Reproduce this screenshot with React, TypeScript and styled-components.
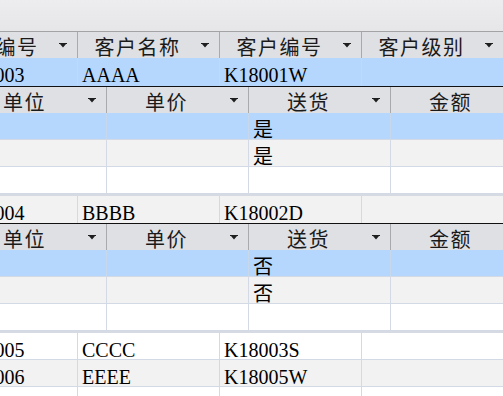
import styled, { createGlobalStyle } from "styled-components";

const GlobalStyle = createGlobalStyle`
  *, *::before, *::after {
    box-sizing: border-box;
  }
  html, body {
    margin: 0;
    padding: 0;
    background: #ffffff;
    overflow: hidden;
  }
  body {
    font-family: "Liberation Serif", "Noto Sans CJK SC", serif;
    color: #000000;
  }
`;

type Tone = "blue" | "grey" | "white";

const toneColor: Record<Tone, string> = {
  blue: "#b6d7fd",
  grey: "#f2f2f2",
  white: "#ffffff",
};

const Page = styled.div`
  width: 503px;
  height: 396px;
  overflow: hidden;
`;

const TopBar = styled.div`
  height: 32px;
  background: linear-gradient(#ededef, #e6e6e8);
  border-bottom: 1px solid #a3a3a6;
`;

const Sheet = styled.div`
  margin-left: -64px;
  width: 640px;
`;

const HeaderRow = styled.div<{ $indent?: number }>`
  display: grid;
  grid-template-columns: repeat(4, 142px);
  height: 26px;
  margin-left: ${(p) => p.$indent || 0}px;
  background: #dfe0e4;
`;

const HeaderCell = styled.div`
  display: flex;
  align-items: center;
  border-right: 1px solid #a9aaad;
  font-family: "Noto Sans CJK SC", sans-serif;
  font-size: 20px;
  line-height: 20px;
  letter-spacing: 1.5px;
  color: #1a1a1a;
`;

const HeaderTitle = styled.span`
  flex: 1;
  text-align: center;
  padding-top: 3px;
  white-space: nowrap;
`;

const FilterButton = styled.span<{ $hidden?: boolean }>`
  width: 22px;
  display: flex;
  align-items: center;
  padding-left: 4px;
  visibility: ${(p) => (p.$hidden ? "hidden" : "visible")};
`;

const DataRow = styled.div<{ $tone: Tone; $height: number; $dark?: boolean; $indent?: number }>`
  display: grid;
  grid-template-columns: repeat(4, 142px);
  height: ${(p) => p.$height}px;
  margin-left: ${(p) => p.$indent || 0}px;
  background: ${(p) => toneColor[p.$tone]};
  border-bottom: 1px solid ${(p) => (p.$dark ? "#111111" : "#d3dae6")};
`;

const DataCell = styled.div<{ $tone: Tone }>`
  border-right: 1px solid ${(p) => (p.$tone === "blue" ? "#c8d8ec" : "#d3dae6")};
  padding: 8px 0 0 4px;
  font-size: 20px;
  line-height: 18px;
  white-space: nowrap;
`;

const Divider = styled.div`
  height: 2px;
  background: #d6dae2;
`;

function FilterArrow() {
  return (
    <svg width="8" height="5" viewBox="0 0 8 5">
      <path d="M0 0h8v1H0z M1 1h6L4 4.5z" fill="#1e1e1e" />
    </svg>
  );
}

const mainCols = ["订单编号", "客户名称", "客户编号", "客户级别"];
const subCols = ["单位", "单价", "送货", "金额"];
const subTones: Tone[] = ["blue", "grey", "white"];

type Order = {
  no: string;
  name: string;
  code: string;
  tone: Tone;
  delivery?: string;
};

const orders: Order[] = [
  { no: "D2018003", name: "AAAA", code: "K18001W", tone: "blue", delivery: "是" },
  { no: "D2018004", name: "BBBB", code: "K18002D", tone: "grey", delivery: "否" },
  { no: "D2018005", name: "CCCC", code: "K18003S", tone: "white" },
  { no: "D2018006", name: "EEEE", code: "K18005W", tone: "grey" },
  { no: "D2018007", name: "FFFF", code: "K18006F", tone: "white" },
];

function SubSheet({ delivery }: { delivery: string }) {
  return (
    <>
      <HeaderRow $indent={29}>
        {subCols.map((c, i) => (
          <HeaderCell key={c}>
            <HeaderTitle>{c}</HeaderTitle>
            <FilterButton $hidden={i === 3}>
              <FilterArrow />
            </FilterButton>
          </HeaderCell>
        ))}
      </HeaderRow>
      {subTones.map((tone, r) => (
        <DataRow key={r} $tone={tone} $height={27} $indent={29}>
          <DataCell $tone={tone} />
          <DataCell $tone={tone} />
          <DataCell $tone={tone}>{r < 2 ? delivery : ""}</DataCell>
          <DataCell $tone={tone} />
        </DataRow>
      ))}
      <Divider />
    </>
  );
}

export default function App() {
  return (
    <Page>
      <GlobalStyle />
      <TopBar />
      <Sheet>
        <HeaderRow>
          {mainCols.map((c) => (
            <HeaderCell key={c}>
              <HeaderTitle>{c}</HeaderTitle>
              <FilterButton>
                <FilterArrow />
              </FilterButton>
            </HeaderCell>
          ))}
        </HeaderRow>
        {orders.map((o, i) => (
          <div key={o.no}>
            <DataRow $tone={o.tone} $height={i === 0 ? 29 : o.delivery ? 28 : 27} $dark={!!o.delivery}>
              <DataCell $tone={o.tone}>{o.no}</DataCell>
              <DataCell $tone={o.tone}>{o.name}</DataCell>
              <DataCell $tone={o.tone}>{o.code}</DataCell>
              <DataCell $tone={o.tone} />
            </DataRow>
            {o.delivery && <SubSheet delivery={o.delivery} />}
          </div>
        ))}
      </Sheet>
    </Page>
  );
}
